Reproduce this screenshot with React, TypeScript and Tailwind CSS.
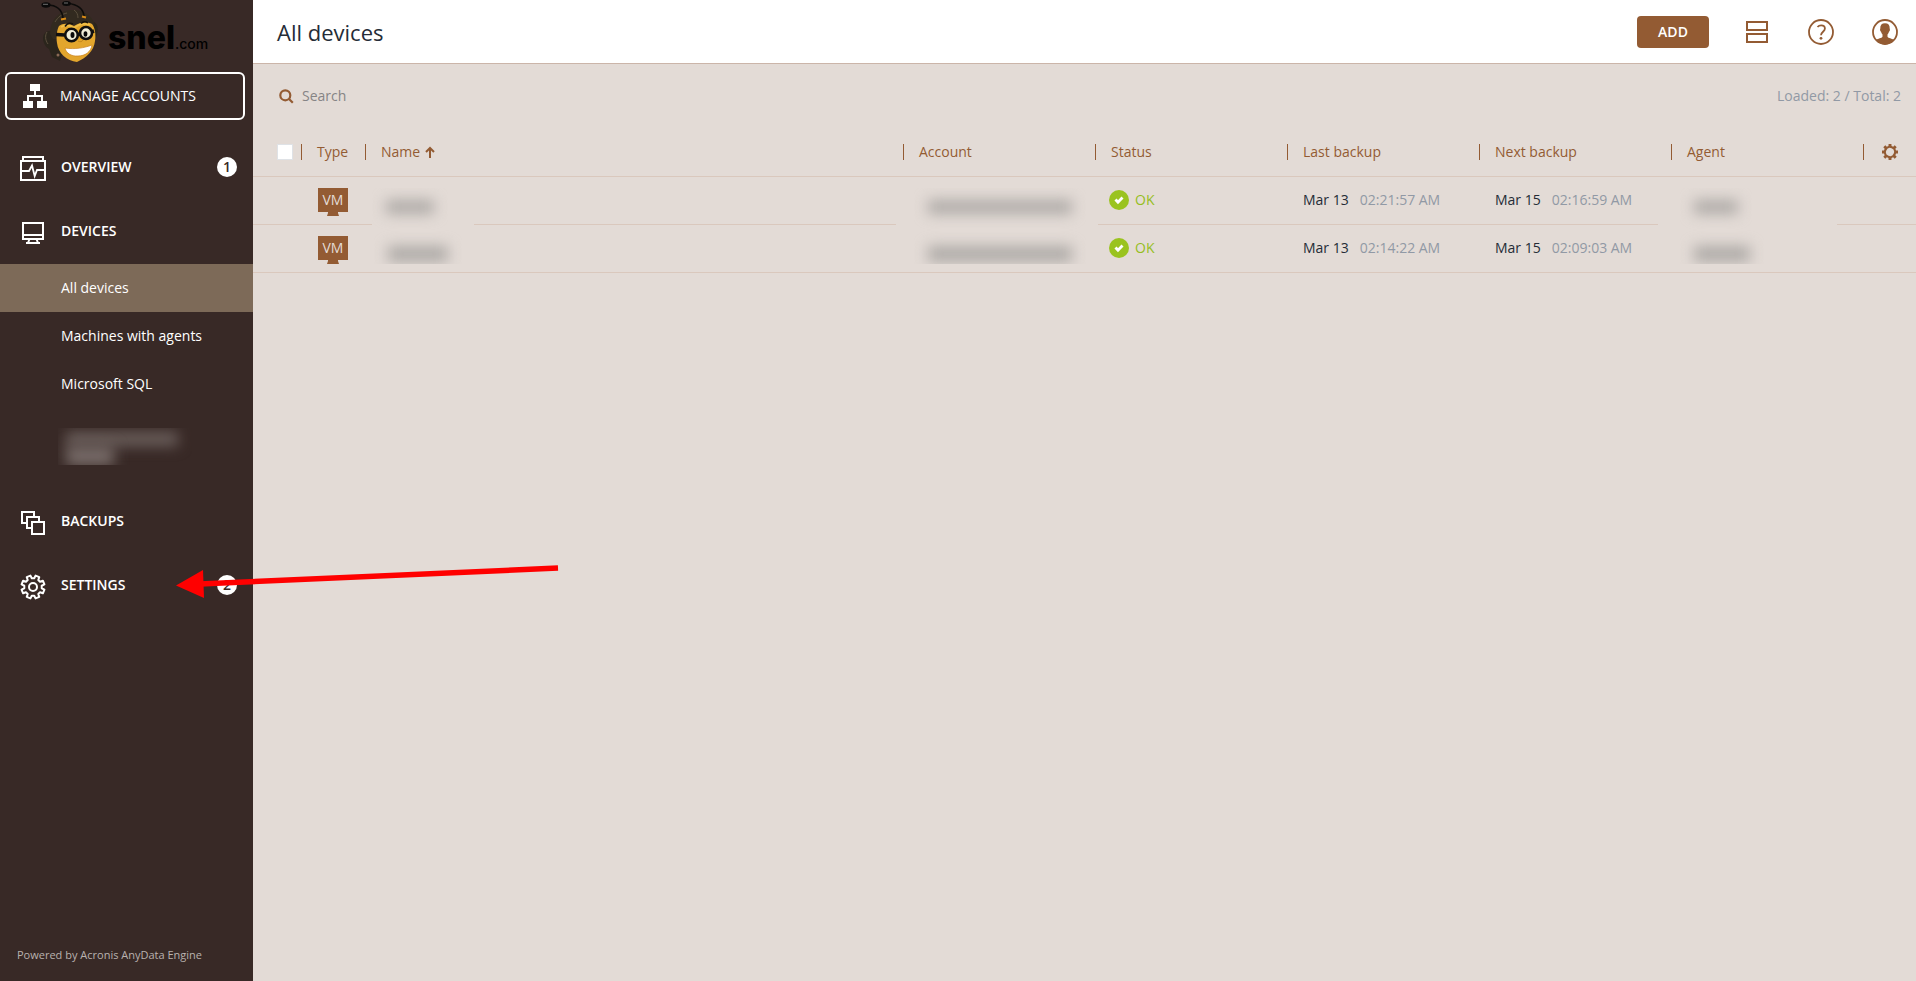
import React from "react";

const BRAND = "#935b33";

function BeeLogo() {
  return (
    <svg width="64" height="64" viewBox="0 0 64 64" fill="none" aria-hidden="true">
      <path d="M11 31c-6 1-7 7-5 12 1 3 3 5 5 6l3 8 8 4 4-12-4-20z" fill="#2b251c" />
      <path d="M12 34C12 19 22 10 34 10c14 0 22 8 24 18l1 9-6 2H15z" fill="#322a1f" />
      <path d="M56 22c4 2 5 8 2 15l-3-4z" fill="#2b251c" />
      <path d="M9 32c-2 3-2 8 1 12M17 22c3-5 7-8 12-9M36 10c3 2 4 5 4 8" stroke="#5b4f3d" strokeWidth="1" />
      <path d="M25 18C24 10 20 5 9 5" stroke="#0d0c0b" strokeWidth="1.600" />
      <path d="M46 17C46 9 39 4 30 3.500" stroke="#0d0c0b" strokeWidth="1.600" />
      <ellipse cx="8" cy="5" rx="4.600" ry="2.800" fill="#0a0a0a" />
      <ellipse cx="28.500" cy="3.500" rx="4.400" ry="2.500" fill="#0a0a0a" />
      <path d="M5 4.300h5M26 3h4" stroke="#7a7a7a" strokeWidth="0.900" />
      <path d="M23 19.500l5-1M44 16.500l4 1" stroke="#d78a16" strokeWidth="2.200" />
      <path d="M21 26c4-3 9-3 15 0 6-4 13-5 18-2 3 4 4 10 3 17-1 10-9 17-18 21-10-1-19-9-20-19-1-7 0-13 2-17z" fill="#e3a62d" />
      <path d="M23 27c5-3 9-2 13 1 5-4 11-5 16-3" stroke="#f0bf48" strokeWidth="1.800" />
      <path d="M18 34.500l9 .5M40 34.500l3-.5M53 32l3-1" stroke="#11100f" strokeWidth="3.600" />
      <circle cx="33.500" cy="35" r="6.300" fill="#f0edd8" stroke="#11100f" strokeWidth="2.600" />
      <circle cx="48" cy="33" r="6" fill="#f0edd8" stroke="#11100f" strokeWidth="2.600" />
      <ellipse cx="34.500" cy="35" rx="2" ry="2.900" fill="#0b0b0b" />
      <ellipse cx="47.500" cy="34" rx="1.900" ry="2.800" fill="#0b0b0b" />
      <path d="M27 26.500c2-3 5-4 8-2.500M43 23.500c2-2 5-2 7-.5" stroke="#17120c" strokeWidth="1.500" />
      <path d="M40 41c2 1 4 1 5-1" stroke="#c2851c" strokeWidth="0.900" />
      <path d="M27 48c10 1.500 19 0 27-3-1 7-7 11-14 11-7 .5-12-3-13-8z" fill="#fff" stroke="#c8801a" strokeWidth="0.700" />
      <circle cx="20" cy="55" r="1.500" fill="#8a6a55" />
    </svg>
  );
}

function OrgIcon() {
  return (
    <svg width="24" height="24" viewBox="0 0 24 24" fill="#fff" aria-hidden="true">
      <path d="M7 0h10v7H7zM0 17h10v7H0zM14 17h10v7H14z" />
      <path d="M12 7v5M5 17v-5h14v5" fill="none" stroke="#fff" strokeWidth="2" />
    </svg>
  );
}

function OverviewIcon() {
  return (
    <svg width="26" height="26" viewBox="0 0 26 26" fill="none" stroke="#fff" strokeWidth="2" aria-hidden="true">
      <path d="M1 5h24v19H1zM3 5V1h20v4" />
      <path d="M1 15h8l3-5.500 2.700 10.500 2.300-6H25" strokeWidth="1.800" />
    </svg>
  );
}

function DevicesIcon() {
  return (
    <svg width="26" height="26" viewBox="0 0 26 26" fill="none" stroke="#fff" strokeWidth="2" aria-hidden="true">
      <path d="M3 3h20v16H3zM3 15h20M9.500 19L8 23M16.500 19l1.500 4M6 23h14" />
    </svg>
  );
}

function BackupsIcon() {
  return (
    <svg width="26" height="26" viewBox="0 0 26 26" fill="none" stroke="#fff" strokeWidth="2" aria-hidden="true">
      <path d="M12 12h12v12H12z" />
      <path d="M12 18H7V7h12v5" />
      <path d="M7 13H2V2h12v5" />
    </svg>
  );
}

function gearPath(c: number, outer: number, inner: number, teeth: number) {
  const points: string[] = [];
  const step = (Math.PI * 2) / teeth;
  for (let i = 0; i < teeth; i++) {
    const a = i * step - Math.PI / 2 + step / 2;
    const spread: [number, number][] = [
      [-0.32, inner],
      [-0.22, outer],
      [0.22, outer],
      [0.32, inner],
    ];
    for (const [f, r] of spread) {
      points.push(`${(c + r * Math.cos(a + f * step)).toFixed(2)} ${(c + r * Math.sin(a + f * step)).toFixed(2)}`);
    }
  }
  return `M${points.join("L")}Z`;
}

function SettingsIcon() {
  return (
    <svg width="26" height="26" viewBox="0 0 26 26" fill="none" stroke="#fff" strokeWidth="2" strokeLinejoin="round" aria-hidden="true">
      <path d={gearPath(13, 11.7, 8.8, 8)} />
      <circle cx="13" cy="13" r="4" />
    </svg>
  );
}

function ColumnsGearIcon() {
  return (
    <svg width="16" height="16" viewBox="0 0 16 16" fill={BRAND} fillRule="evenodd" aria-hidden="true">
      <path d={`${gearPath(8, 8.2, 6.2, 8)}M8 4a4 4 0 1 0 0 8a4 4 0 1 0 0-8Z`} transform="rotate(22.5 8 8)" />
    </svg>
  );
}

function StatusOk() {
  return (
    <span className="flex items-center gap-1.5 text-[#96be1e]">
      <svg width="20" height="20" viewBox="0 0 20 20" fill="none" aria-hidden="true">
        <circle cx="10" cy="10" r="10" fill="#9ac31f" />
        <path d="M6.500 9.500l2.500 2.800L13.500 7.500" stroke="#fff" strokeWidth="2.800" />
      </svg>
      OK
    </span>
  );
}

function VmIcon() {
  return (
    <span className="flex w-[30px] flex-col items-center">
      <span className="flex h-6 w-full items-center justify-center bg-[#935b33] text-[14px] text-[#e3dbd6]">VM</span>
      <svg width="12" height="4" viewBox="0 0 12 4" fill={BRAND} aria-hidden="true">
        <path d="M1 0h10v1l1 3H0l1-3z" />
      </svg>
    </span>
  );
}

type NavProps = { icon: React.ReactNode; label: string; badge?: number };

function NavItem({ icon, label, badge }: NavProps) {
  return (
    <a href="#" className="flex h-16 items-center pr-4 pb-0.5 pl-5 text-[14px] font-semibold text-white">
      <span className="mt-1">{icon}</span>
      <span className="ml-[15px] flex-1">{label}</span>
      {badge !== undefined && (
        <span className="flex size-5 items-center justify-center rounded-full bg-white text-[14px] leading-5 text-[#382926]">{badge}</span>
      )}
    </a>
  );
}

const columns = ["Account", "Status", "Last backup", "Next backup", "Agent"];

const rows = [
  { last: "02:21:57 AM", next: "02:16:59 AM" },
  { last: "02:14:22 AM", next: "02:09:03 AM" },
];

function HeadLabel({ children }: { children?: React.ReactNode }) {
  return <span className="flex h-4 items-center gap-1 border-l border-[#935b33] pl-[15px]">{children}</span>;
}

function Redacted({ box, first, second }: { box: string; first: string; second: string }) {
  return (
    <div className={`absolute h-[76px] overflow-hidden bg-[#e3dbd6] ${box}`}>
      <div className={`mt-3 h-3.5 bg-[#aeaaa7] blur-[7px] ${first}`} />
      <div className={`mt-8 h-4 bg-[#aeaaa7] blur-[7px] ${second}`} />
    </div>
  );
}

function Timestamp({ date, time }: { date: string; time: string }) {
  return (
    <span className="flex gap-[11px]">
      <span className="text-[#252c37]">{date}</span>
      <span className="text-[#9199a5]">{time}</span>
    </span>
  );
}

export default function App() {
  return (
    <div className="relative flex min-h-screen overflow-hidden bg-[#e3dbd6] font-['Open_Sans',sans-serif] text-[14px] leading-5">
      <aside className="flex w-[253px] shrink-0 flex-col bg-[#382926]">
        <div className="flex h-[72px] pl-[38px]">
          <BeeLogo />
          <div className="flex items-baseline pt-[18px] pl-1.5 font-['Inter',sans-serif] text-black">
            <span className="text-[32px] leading-10 font-extrabold">snel</span>
            <span className="text-[14px] font-medium">.com</span>
          </div>
        </div>
        <button className="mr-2 ml-[5px] flex h-12 items-center rounded-md border-2 border-white pl-4 text-left text-white">
          <OrgIcon />
          <span className="ml-[13px]">MANAGE ACCOUNTS</span>
        </button>
        <nav className="mt-4 flex-1">
          <NavItem icon={<OverviewIcon />} label="OVERVIEW" badge={1} />
          <NavItem icon={<DevicesIcon />} label="DEVICES" />
          <div className="flex flex-col text-white">
            <a href="#" className="flex h-12 items-center bg-[#7d6a58] pl-[61px]">All devices</a>
            <a href="#" className="flex h-12 items-center pl-[61px]">Machines with agents</a>
            <a href="#" className="flex h-12 items-center pl-[61px]">Microsoft SQL</a>
            <div className="h-[82px] pt-5 pl-[58px]">
              <div className="h-[37px] w-[134px] overflow-hidden pt-1 pl-2">
                <div className="h-3.5 w-28 bg-[#6c605d] blur-[7px]" />
                <div className="h-5 w-12 bg-[#776b68] blur-[7px]" />
              </div>
            </div>
          </div>
          <NavItem icon={<BackupsIcon />} label="BACKUPS" />
          <NavItem icon={<SettingsIcon />} label="SETTINGS" badge={2} />
        </nav>
        <footer className="pb-4 pl-[17px] text-[11px] text-[#b9b2af]">Powered by Acronis AnyData Engine</footer>
      </aside>

      <main className="flex min-w-0 flex-1 flex-col">
        <header className="flex h-16 items-center border-b border-[#cbb5a9] bg-white pr-[18px] pl-6">
          <h1 className="flex-1 text-[22px] leading-8 text-[#252c37]">All devices</h1>
          <button className="h-8 w-[72px] rounded bg-[#935b33] font-semibold text-white">ADD</button>
          <button aria-label="Layout" className="ml-9">
            <svg width="24" height="24" viewBox="0 0 24 24" fill="none" stroke={BRAND} strokeWidth="2" aria-hidden="true">
              <path d="M2 2h20v8H2zM2 14h20v8H2z" />
            </svg>
          </button>
          <button aria-label="Help" className="ml-[39px]">
            <svg width="26" height="26" viewBox="0 0 26 26" fill="none" stroke={BRAND} strokeWidth="1.800" aria-hidden="true">
              <circle cx="13" cy="13" r="12" />
              <path d="M9.500 8c1-1.200 2.300-1.700 3.700-1.700 2.200 0 3.700 1.200 3.700 3.200 0 3.200-3.900 3.300-3.900 6.800" />
              <circle cx="13" cy="19.300" r="1.400" fill={BRAND} stroke="none" />
            </svg>
          </button>
          <button aria-label="Account" className="ml-[38px]">
            <svg width="26" height="26" viewBox="0 0 26 26" fill="none" aria-hidden="true">
              <circle cx="13" cy="13" r="12" stroke={BRAND} strokeWidth="1.800" />
              <path d="M13 4.200c3.200 0 4.900 1.900 4.700 5 0 .8.400 1 .2 2-.2.900-.7 1-.9 1.600-.3 1.200-.8 2-1.500 2.700v2.300c.8 1.700 4.500 1.500 6.500 3.200-2.200 2.800-5.500 4.500-9 4.500s-6.800-1.700-9-4.500c2-1.700 5.700-1.500 6.500-3.200v-2.300c-.7-.7-1.200-1.500-1.500-2.700-.2-.6-.7-.7-.9-1.600-.2-1 .2-1.200.2-2-.2-3.100 1.500-5 4.700-5z" fill={BRAND} />
            </svg>
          </button>
        </header>

        <div className="flex h-16 items-center pr-[15px] pl-[26px]">
          <svg width="15" height="15" viewBox="0 0 15 15" fill="none" stroke={BRAND} strokeWidth="2.200" aria-hidden="true">
            <circle cx="6.300" cy="6.300" r="5" />
            <path d="M9.800 9.800l4 4" />
          </svg>
          <input aria-label="Search" placeholder="Search" className="ml-2 flex-1 bg-transparent outline-none placeholder:text-[#868485]" />
          <span className="text-[#9199a5]">Loaded: 2 / Total: 2</span>
        </div>

        <table className="w-full table-fixed border-separate border-spacing-0 text-left">
          <colgroup>
            <col className="w-12" />
            <col className="w-16" />
            <col />
            {columns.map((c) => (
              <col key={c} className="w-48" />
            ))}
            <col className="w-[53px]" />
          </colgroup>
          <thead>
            <tr className="h-[49px] text-[#935b33] [&>th]:border-b [&>th]:border-[#dac8bd] [&>th]:font-normal">
              <th className="pl-6">
                <input type="checkbox" aria-label="Select all" className="block size-4 appearance-none border border-[#dfe2e6] bg-white" />
              </th>
              <th><HeadLabel>Type</HeadLabel></th>
              <th>
                <HeadLabel>
                  Name
                  <svg width="12" height="12" viewBox="0 0 12 12" fill="none" stroke={BRAND} strokeWidth="2" aria-hidden="true">
                    <path d="M6 12V2M2 6l4-4 4 4" />
                  </svg>
                </HeadLabel>
              </th>
              {columns.map((c) => (
                <th key={c}><HeadLabel>{c}</HeadLabel></th>
              ))}
              <th>
                <HeadLabel>
                  <button aria-label="Column settings" className="ml-[3px]"><ColumnsGearIcon /></button>
                </HeadLabel>
              </th>
            </tr>
          </thead>
          <tbody>
            {rows.map((r, i) => (
              <tr key={r.last} className="h-12 [&>td]:border-b [&>td]:border-[#dac8bd]">
                <td />
                <td className="pt-0.5 pl-[17px]"><VmIcon /></td>
                <td className="relative">
                  {i === 0 && <Redacted box="top-[11px] left-[7px] w-[102px]" first="ml-3.5 w-12" second="ml-4 w-15" />}
                </td>
                <td className="relative">
                  {i === 0 && <Redacted box="top-[11px] -left-[7px] z-10 w-[202px]" first="ml-8 w-36" second="ml-8 w-36" />}
                </td>
                <td className="pb-0.5 pl-[14px]"><StatusOk /></td>
                <td className="pb-0.5 pl-4"><Timestamp date="Mar 13" time={r.last} /></td>
                <td className="pb-0.5 pl-4"><Timestamp date="Mar 15" time={r.next} /></td>
                <td className="relative">
                  {i === 0 && <Redacted box="top-[11px] -left-[13px] w-[179px]" first="ml-9 w-11" second="ml-9 w-14" />}
                </td>
                <td />
              </tr>
            ))}
          </tbody>
        </table>
      </main>

      <svg className="pointer-events-none absolute top-[560px] left-[170px]" width="400" height="50" viewBox="0 0 400 50" aria-hidden="true">
        <path d="M30 24L388 8" stroke="#ff0000" strokeWidth="5.500" />
        <path d="M6 25.500L33 10l1 28z" fill="#ff0000" />
      </svg>
    </div>
  );
}
